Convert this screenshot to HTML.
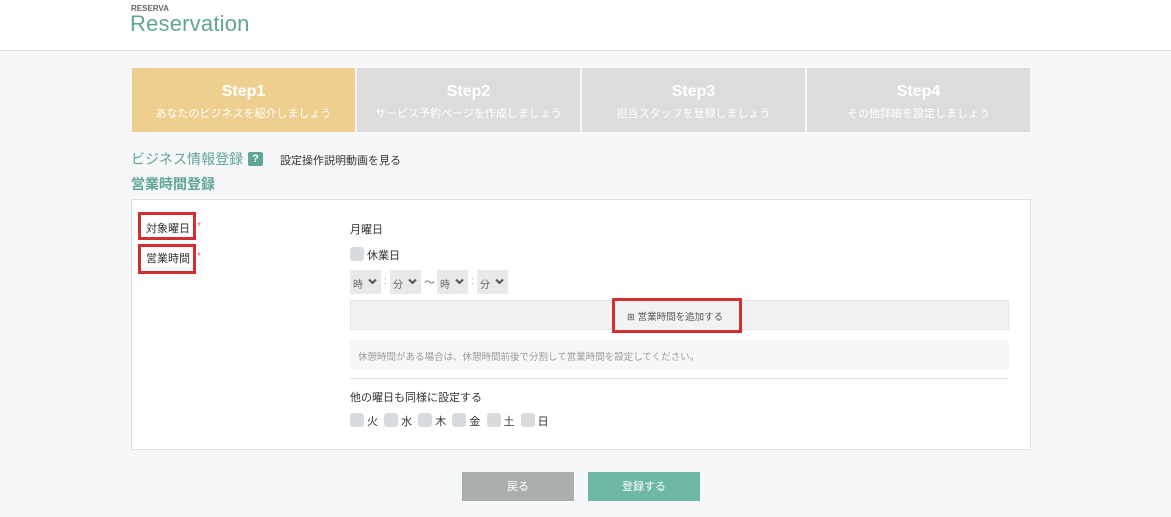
<!DOCTYPE html><html><head><meta charset="utf-8"><style>
*{margin:0;padding:0;box-sizing:border-box}
body{width:1171px;height:517px;background:#f6f7f9;font-family:"Liberation Sans","Noto Sans CJK JP",sans-serif;position:relative;overflow:hidden;color:#333}
.a{position:absolute}
.step{position:absolute;top:68px;width:223px;height:64px;background:#dcdcdc;color:#fff;text-align:center}
.step b{display:block;font-size:16px;margin-top:15px}
.step span{display:block;font-size:11px;margin-top:4px}
.cb{display:inline-block;width:14px;height:14px;background:#d9dcdf;border-radius:3px;vertical-align:-2px;margin-right:3px}
.sel{position:absolute;top:270px;height:24px;background:#e8e9eb;font-size:10px;color:#666;padding:6px 0 0 3px}
.sel svg{position:absolute;right:4px;top:8px}
.red{position:absolute;border:3px solid #d32f2f;background:#fff}
</style></head><body>
<div class="a" style="left:0;top:0;width:1171px;height:51px;background:#fff;border-bottom:1px solid #dcdcdc"></div>
<div class="a" style="left:131px;top:4px;font-size:8px;font-weight:bold;color:#666">RESERVA</div>
<div class="a" style="left:130px;top:11px;font-size:22px;color:#5fa693;letter-spacing:0.2px">Reservation</div>
<div class="step" style="left:132px;background:#eecf8f"><b>Step1</b><span>あなたのビジネスを紹介しましょう</span></div>
<div class="step" style="left:357px"><b>Step2</b><span>サービス予約ページを作成しましょう</span></div>
<div class="step" style="left:582px"><b>Step3</b><span>担当スタッフを登録しましょう</span></div>
<div class="step" style="left:807px"><b>Step4</b><span>その他詳細を設定しましょう</span></div>
<div class="a" style="left:131px;top:149px;font-size:14px;color:#5fa693">ビジネス情報登録</div>
<div class="a" style="left:248px;top:152px;width:15px;height:14px;background:#5fa693;color:#fff;font-size:11px;font-weight:bold;text-align:center;border-radius:2px;line-height:14px">?</div>
<div class="a" style="left:280px;top:152px;font-size:11px;color:#333">設定操作説明動画を見る</div>
<div class="a" style="left:131px;top:174px;font-size:14px;color:#5fa693;font-weight:bold">営業時間登録</div>
<div class="a" style="left:131px;top:199px;width:900px;height:251px;background:#fff;border:1px solid #e0e0e0"></div>
<div class="red" style="left:138px;top:212px;width:58px;height:28px"></div>
<div class="a" style="left:146px;top:220px;font-size:11px">対象曜日</div>
<div class="a" style="left:197px;top:221px;font-size:10px;color:#e66">*</div>
<div class="red" style="left:138px;top:244px;width:58px;height:30px"></div>
<div class="a" style="left:146px;top:250px;font-size:11px">営業時間</div>
<div class="a" style="left:197px;top:251px;font-size:10px;color:#e66">*</div>
<div class="a" style="left:350px;top:221px;font-size:11px">月曜日</div>
<div class="a" style="left:350px;top:247px;font-size:11px"><span class="cb"></span>休業日</div>
<div class="sel" style="left:350px;width:31px">時<svg width="9" height="7" viewBox="0 0 9 7"><path d="M1 1.5L4.5 5 8 1.5" stroke="#555" stroke-width="2" fill="none"/></svg></div>
<div class="a" style="left:384px;top:276px;font-size:10px;color:#999">:</div>
<div class="sel" style="left:390px;width:31px">分<svg width="9" height="7" viewBox="0 0 9 7"><path d="M1 1.5L4.5 5 8 1.5" stroke="#555" stroke-width="2" fill="none"/></svg></div>
<div class="a" style="left:424px;top:274px;font-size:11px;color:#666">〜</div>
<div class="sel" style="left:437px;width:31px">時<svg width="9" height="7" viewBox="0 0 9 7"><path d="M1 1.5L4.5 5 8 1.5" stroke="#555" stroke-width="2" fill="none"/></svg></div>
<div class="a" style="left:471px;top:276px;font-size:10px;color:#999">:</div>
<div class="sel" style="left:477px;width:31px">分<svg width="9" height="7" viewBox="0 0 9 7"><path d="M1 1.5L4.5 5 8 1.5" stroke="#555" stroke-width="2" fill="none"/></svg></div>
<div class="a" style="left:350px;top:300px;width:659px;height:30px;background:#f2f2f2;border:1px solid #e6e6e6"></div>
<div class="red" style="left:612px;top:298px;width:130px;height:35px;background:#f2f2f2"></div>
<div class="a" style="left:627px;top:309px;font-size:9.5px;color:#555">⊞ 営業時間を追加する</div>
<div class="a" style="left:350px;top:340px;width:659px;height:29px;background:#f7f7f7;font-size:9.5px;color:#999;padding:9px 0 0 8px">休憩時間がある場合は、休憩時間前後で分割して営業時間を設定してください。</div>
<div class="a" style="left:350px;top:378px;width:659px;border-top:1px solid #e0e0e0"></div>
<div class="a" style="left:350px;top:389px;font-size:11px">他の曜日も同様に設定する</div>
<div class="a" style="left:350px;top:413px;font-size:11px;word-spacing:0"><span class="cb"></span>火&nbsp;&nbsp;<span class="cb"></span>水&nbsp;&nbsp;<span class="cb"></span>木&nbsp;&nbsp;<span class="cb"></span>金&nbsp;&nbsp;<span class="cb"></span>土&nbsp;&nbsp;<span class="cb"></span>日</div>
<div class="a" style="left:462px;top:472px;width:112px;height:29px;background:#a9afaf;color:#fff;font-size:11px;text-align:center;line-height:31px">戻る</div>
<div class="a" style="left:588px;top:472px;width:112px;height:29px;background:#6cb8a5;color:#fff;font-size:11px;text-align:center;line-height:31px">登録する</div>
</body></html>
